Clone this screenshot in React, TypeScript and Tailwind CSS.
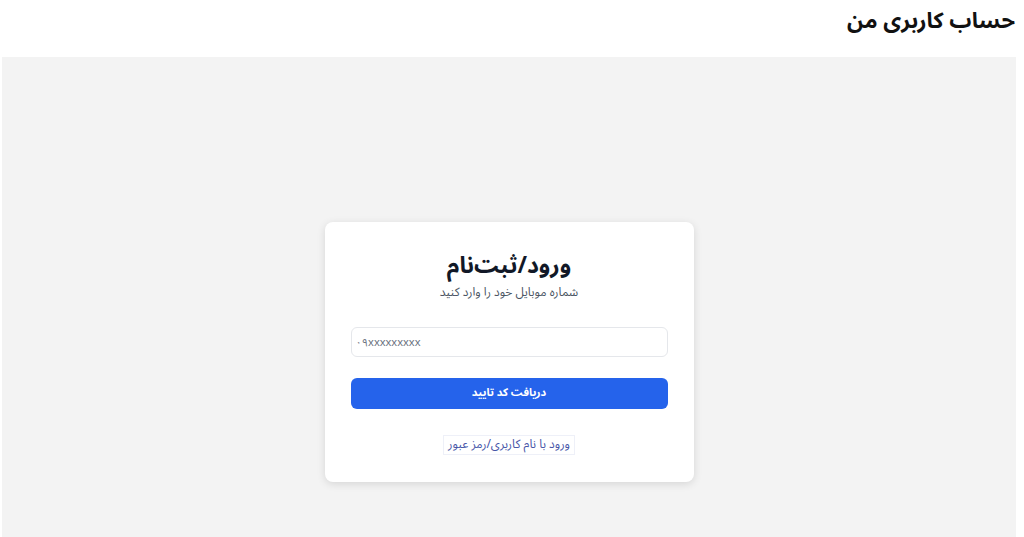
import React from "react";

export default function App() {
  const font = { fontFamily: '"Noto Sans Arabic", "Vazirmatn", "DejaVu Sans", "Noto Sans", sans-serif' };
  return (
    <div dir="rtl" className="w-[1024px] h-[537px] bg-white overflow-hidden" style={font}>
      <div className="h-[57px] flex items-start pt-[2px] pr-[9px]">
        <h1 className="text-[22px] leading-[38px] font-bold text-[#111]">حساب کاربری من</h1>
      </div>
      <div className="mr-[8px] ml-[2px] h-[480px] bg-[#f3f3f3] flex justify-center pt-[165px]">
        <div className="w-[369px] h-[260px] bg-white rounded-lg shadow-[0_2px_8px_rgba(0,0,0,0.12)] px-[26px] pt-[28px] flex flex-col">
          <h2 className="text-center text-[23px] leading-[32px] font-bold text-[#111827]">ورود/ثبت‌نام</h2>
          <p className="text-center text-[12px] leading-[16px] text-[#4b5563] mt-[3px]">شماره موبایل خود را وارد کنید</p>
          <input
            dir="ltr"
            placeholder="۰۹xxxxxxxxx"
            className="mt-[26px] h-[30px] w-full border border-[#e5e7eb] rounded-md px-[4px] text-[11px] placeholder:text-[#6b7280] outline-none"
          />
          <button className="mt-[21px] h-[31px] w-full bg-[#2563eb] text-white rounded-md text-[11px] font-bold">دریافت کد تایید</button>
          <div className="flex justify-center mt-[26px]">
            <button className="h-[20px] px-[4px] border border-[#eef0f8] text-[#4756a8] text-[12px] leading-[18px]">ورود با نام کاربری/رمز عبور</button>
          </div>
        </div>
      </div>
    </div>
  );
}
